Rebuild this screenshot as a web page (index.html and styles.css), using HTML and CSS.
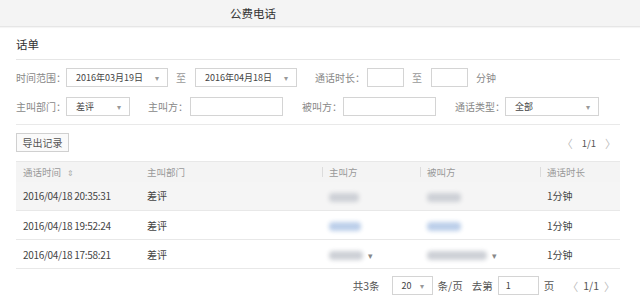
FILE: index.html
```html
<!DOCTYPE html>
<html lang="zh">
<head>
  <meta charset="utf-8">
  <title>公费电话</title>
  <link rel="stylesheet" href="styles.css">
</head>
<body>
  <div class="topbar">公费电话</div>

  <div class="main">
    <div class="section-title">话单</div>

    <div class="filters">
      <div class="frow">
        <span class="lbl w50">时间范围：</span>
        <div class="sel w102"><span>2016年03月19日</span><i>▾</i></div>
        <span class="to">至</span>
        <div class="sel w102"><span>2016年04月18日</span><i>▾</i></div>
        <span class="lbl ml18 w52">通话时长：</span>
        <div class="inp w37"></div>
        <span class="to">至</span>
        <div class="inp w37"></div>
        <span class="lbl ml8">分钟</span>
      </div>
      <div class="frow">
        <span class="lbl w50">主叫部门：</span>
        <div class="sel w64"><span>差评</span><i>▾</i></div>
        <span class="lbl ml18 w42">主叫方：</span>
        <div class="inp w93"></div>
        <span class="lbl ml19 w41">被叫方：</span>
        <div class="inp w93"></div>
        <span class="lbl ml19 w50">通话类型：</span>
        <div class="sel w94"><span>全部</span><i>▾</i></div>
      </div>
    </div>

    <div class="toolbar">
      <button class="btn">导出记录</button>
      <div class="mini-pager"><span class="arr">〈</span><span>1/1</span><span class="arr">〉</span></div>
    </div>

    <table class="grid">
      <colgroup>
        <col class="c1"><col class="c2"><col class="c3"><col class="c4"><col class="c5">
      </colgroup>
      <thead>
        <tr>
          <th>通话时间 <span class="sort">⇕</span></th>
          <th>主叫部门</th>
          <th class="sep">主叫方</th>
          <th class="sep">被叫方</th>
          <th class="sep">通话时长</th>
        </tr>
      </thead>
      <tbody>
        <tr class="hover">
          <td class="num">2016/04/18 20:35:31</td>
          <td>差评</td>
          <td><span class="blur gray b30"></span></td>
          <td><span class="blur gray b34"></span></td>
          <td>1分钟</td>
        </tr>
        <tr>
          <td class="num">2016/04/18 19:52:24</td>
          <td>差评</td>
          <td><span class="blur blue b32"></span></td>
          <td><span class="blur blue b34"></span></td>
          <td>1分钟</td>
        </tr>
        <tr>
          <td class="num">2016/04/18 17:58:21</td>
          <td>差评</td>
          <td><span class="blur gray b34"></span><i class="caret">▾</i></td>
          <td><span class="blur gray b60"></span><i class="caret">▾</i></td>
          <td>1分钟</td>
        </tr>
      </tbody>
    </table>

    <div class="pager">
      <span>共3条</span>
      <div class="sel w41"><span>20</span><i>▾</i></div>
      <span>条/页</span>
      <span class="ml12">去第</span>
      <div class="inp w41 pg"><span>1</span></div>
      <span>页</span>
      <span class="arr ml8">〈</span>
      <span>1/1</span>
      <span class="arr">〉</span>
    </div>
  </div>
</body>
</html>
```

FILE: styles.css
```css
* {
  box-sizing: border-box;
}

body {
  margin: 0;
  font-family: "Noto Sans CJK SC", "Liberation Sans", sans-serif;
  font-size: 10px;
  color: #555;
  background: #fff;
}

.topbar {
  height: 27px;
  line-height: 26px;
  background: #f4f4f4;
  border-bottom: 1px solid #e6e6e6;
  box-shadow: 0 1px 1px rgba(0, 0, 0, 0.04);
  padding-left: 230px;
  font-size: 11.5px;
  color: #333;
}

.main {
  padding: 0 20px 0 16px;
}

.section-title {
  height: 33px;
  line-height: 34px;
  font-size: 11.5px;
  color: #333;
  border-bottom: 1px solid #e6e6e6;
}

.filters {
  padding: 8px 0 8px;
  border-bottom: 1px solid #e9e9e9;
}

.frow {
  display: flex;
  align-items: center;
  height: 19px;
  color: #888;
}

.frow + .frow {
  margin-top: 10px;
}

.lbl {
  white-space: nowrap;
  flex: none;
}

.to {
  margin: 0 9px 0 8px;
  color: #999;
}

.ml8 { margin-left: 8px; }
.ml12 { margin-left: 4px; }
.ml18 { margin-left: 18px; }
.ml19 { margin-left: 19px; }

.w41 { width: 41px; }
.w42 { width: 42px; }
.w50 { width: 50px; }
.w52 { width: 52px; }

.sel, .inp {
  height: 19px;
  border: 1px solid #d4d4d4;
  background: #fff;
  display: flex;
  align-items: center;
  color: #444;
  font-size: 9px;
  flex: none;
}

.sel {
  justify-content: space-between;
  padding: 0 8px 0 9px;
}

.sel i {
  font-style: normal;
  color: #999;
  font-size: 8px;
}

.w102 { width: 102px; }
.w64 { width: 64px; }
.w94 { width: 94px; }
.w93 { width: 93px; }
.w37 { width: 37px; }

.toolbar {
  display: flex;
  justify-content: space-between;
  align-items: center;
  margin: 8px 0 9px;
}

.btn {
  height: 19px;
  width: 53px;
  padding: 0;
  border: 1px solid #d0d0d0;
  background: #fafafa;
  color: #555;
  font-family: inherit;
  font-size: 10px;
}

.mini-pager {
  display: flex;
  align-items: center;
  gap: 9px;
  padding-right: 4px;
  color: #555;
  font-size: 9.5px;
}

.arr {
  color: #bbb;
  font-size: 11px;
}

.grid {
  width: 100%;
  border-collapse: collapse;
  table-layout: fixed;
}

.c1 { width: 124px; }
.c2 { width: 182px; }
.c3 { width: 98px; }
.c4 { width: 120px; }
.c5 { width: 80px; }

.grid th {
  height: 20px;
  background: #f4f4f4;
  color: #999;
  font-weight: normal;
  text-align: left;
  padding: 0 7px;
  font-size: 9.5px;
  border-top: 1px solid #e8e8e8;
}

.grid th.sep {
  background-image: linear-gradient(#dcdcdc, #dcdcdc);
  background-size: 1px 10px;
  background-position: left center;
  background-repeat: no-repeat;
}

.sort {
  color: #aaa;
  font-size: 8px;
  margin-left: 4px;
}

.grid td {
  height: 29px;
  padding: 0 7px;
  border-bottom: 1px solid #e8e8e8;
  color: #444;
  font-size: 10px;
  white-space: nowrap;
}

.grid td.num {
  letter-spacing: -0.3px;
}

.grid tr.hover td {
  background: #f5f5f5;
}

.blur {
  display: inline-block;
  height: 9px;
  vertical-align: middle;
  border-radius: 4px;
  filter: blur(2px);
}

.blur.gray { background: #cdd0d6; }
.blur.blue { background: #bccfea; }
.b30 { width: 30px; }
.b32 { width: 32px; }
.b34 { width: 34px; }
.b60 { width: 60px; }

.caret {
  font-style: normal;
  color: #888;
  font-size: 9px;
  margin-left: 5px;
  vertical-align: middle;
}

.pager {
  display: flex;
  justify-content: flex-end;
  align-items: center;
  gap: 5px;
  margin-top: 7px;
  padding-right: 5px;
  color: #555;
  font-size: 10.5px;
}

.pager .sel {
  margin: 0 0 0 7px;
}

.pg {
  padding-left: 7px;
}
```
